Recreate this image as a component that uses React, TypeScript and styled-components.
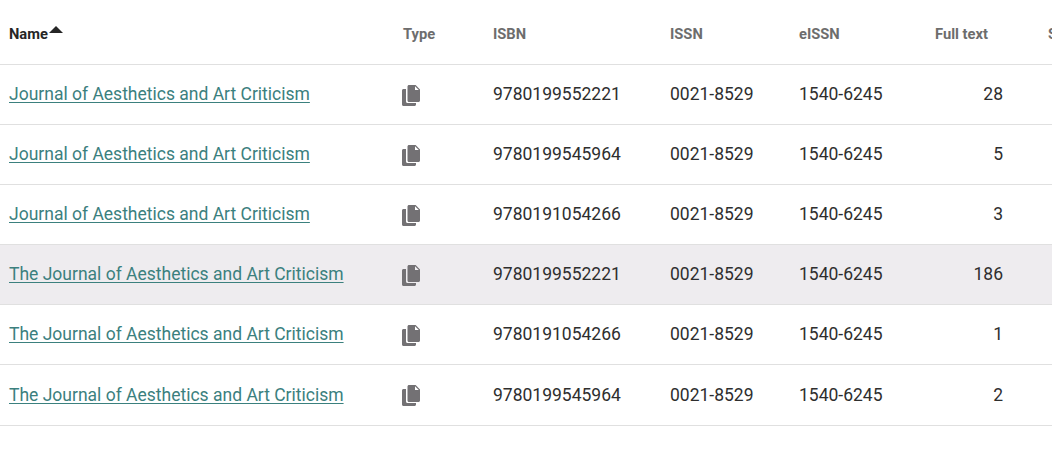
import * as React from "react";
import styled, { createGlobalStyle } from "styled-components";

const GlobalStyle = createGlobalStyle`
  html, body {
    margin: 0;
    padding: 0;
    background: #fff;
    overflow: hidden;
  }
  body {
    font-family: Roboto, "Liberation Sans", sans-serif;
  }
`;

const rows = [
  { name: "Journal of Aesthetics and Art Criticism", isbn: "9780199552221", fullText: 28 },
  { name: "Journal of Aesthetics and Art Criticism", isbn: "9780199545964", fullText: 5 },
  { name: "Journal of Aesthetics and Art Criticism", isbn: "9780191054266", fullText: 3 },
  { name: "The Journal of Aesthetics and Art Criticism", isbn: "9780199552221", fullText: 186, active: true },
  { name: "The Journal of Aesthetics and Art Criticism", isbn: "9780191054266", fullText: 1 },
  { name: "The Journal of Aesthetics and Art Criticism", isbn: "9780199545964", fullText: 2, tall: true },
];

const App: React.FC = () => (
  <>
    <GlobalStyle />
    <Wrapper>
      <Table>
        <colgroup>
          <Col $width={394} />
          <Col $width={90} />
          <Col $width={177} />
          <Col $width={129} />
          <Col $width={136} />
          <Col $width={113} />
          <Col $width={100} />
        </colgroup>
        <thead>
          <tr>
            <HeadCell $sorted>
              Name
              <SortArrow />
            </HeadCell>
            <HeadCell>Type</HeadCell>
            <HeadCell>ISBN</HeadCell>
            <HeadCell>ISSN</HeadCell>
            <HeadCell>eISSN</HeadCell>
            <HeadCell>Full text</HeadCell>
            <HeadCell>Searches</HeadCell>
          </tr>
        </thead>
        <tbody>
          {rows.map((row, i) => (
            <Row key={i} $active={row.active} $tall={row.tall}>
              <Cell>
                <NameLink href="#">{row.name}</NameLink>
              </Cell>
              <Cell>
                <TypeIcon $tall={row.tall} viewBox="0 0 18 21" aria-hidden="true">
                  <path d="M7 0h6.600L18 4.400V15.500c0 .8-.7 1.500-1.500 1.500H7c-.8 0-1.500-.7-1.500-1.500v-14C5.500.7 6.200 0 7 0zm6 1.200V5h3.800L13 1.200z" fillRule="evenodd" />
                  <path d="M4 4v12.500C4 17.300 4.700 18 5.500 18H14v1.500c0 .8-.7 1.500-1.500 1.500H1.500C.7 21 0 20.300 0 19.500v-14C0 4.700.7 4 1.500 4H4z" />
                </TypeIcon>
              </Cell>
              <Cell>{row.isbn}</Cell>
              <Cell>0021-8529</Cell>
              <Cell>1540-6245</Cell>
              <NumberCell>{row.fullText}</NumberCell>
              <Cell />
            </Row>
          ))}
        </tbody>
      </Table>
    </Wrapper>
  </>
);

export default App;

const Wrapper = styled.div`
  width: 1052px;
  height: 456px;
  overflow: hidden;
`;

const Table = styled.table`
  width: 1139px;
  table-layout: fixed;
  border-collapse: separate;
  border-spacing: 0;
`;

const Col = styled.col<{ $width: number }>`
  width: ${({ $width }) => $width}px;
`;

const HeadCell = styled.th<{ $sorted?: boolean }>`
  height: 60px;
  padding: 4px 9px 0;
  box-sizing: content-box;
  border-bottom: 1px solid #e0e0e0;
  font-size: 14.7px;
  font-weight: 700;
  line-height: 20px;
  text-align: left;
  white-space: nowrap;
  color: ${({ $sorted }) => ($sorted ? "#262626" : "#6d6d6d")};
`;

const SortArrow = styled.span`
  display: inline-block;
  width: 0;
  height: 0;
  margin-left: 1px;
  vertical-align: 6px;
  border-left: 7px solid transparent;
  border-right: 7px solid transparent;
  border-bottom: 7px solid #262626;
`;

const Row = styled.tr<{ $active?: boolean; $tall?: boolean }>`
  height: ${({ $tall }) => ($tall ? 61 : 60)}px;
  background: ${({ $active }) => ($active ? "#eeecef" : "#fff")};

  td {
    padding-top: ${({ $tall }) => ($tall ? 1 : 0)}px;
  }
`;

const Cell = styled.td`
  padding: 0 9px 2px;
  border-bottom: 1px solid #e0e0e0;
  font-size: 17.5px;
  line-height: 24px;
  color: #2e2e2e;
  white-space: nowrap;
`;

const NumberCell = styled(Cell)`
  padding-right: 36px;
  text-align: right;
`;

const NameLink = styled.a`
  color: #3b807e;
  text-decoration: underline;
  text-underline-offset: 2px;
`;

const TypeIcon = styled.svg<{ $tall?: boolean }>`
  display: block;
  width: 18px;
  height: 21px;
  margin: ${({ $tall }) => ($tall ? 2 : 4)}px 0 0 -1px;
  fill: #737174;
`;
